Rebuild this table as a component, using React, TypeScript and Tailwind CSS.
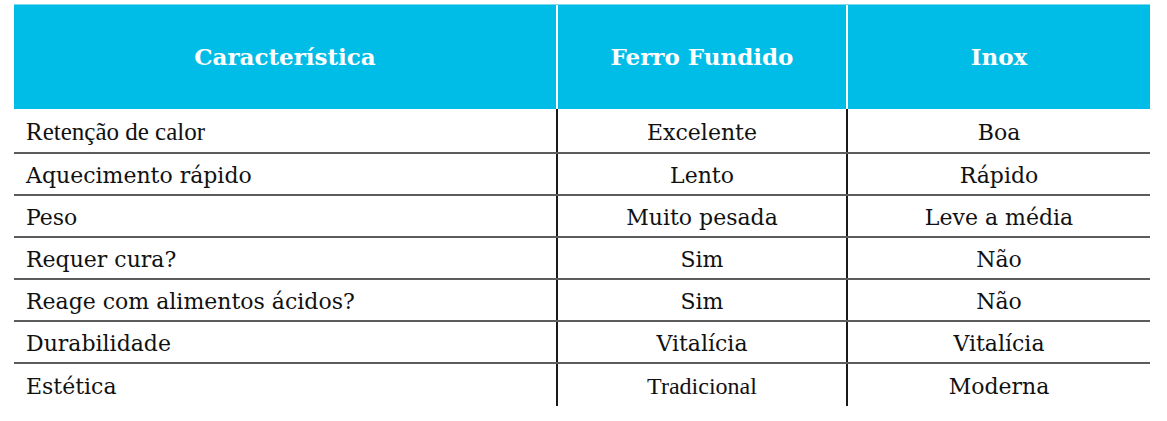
const rows: { label: string; ferro: string; inox: string; labelAlt?: boolean; ferroAlt?: boolean; first?: boolean }[] = [
  { label: "Retenção de calor", ferro: "Excelente", inox: "Boa", labelAlt: true, first: true },
  { label: "Aquecimento rápido", ferro: "Lento", inox: "Rápido" },
  { label: "Peso", ferro: "Muito pesada", inox: "Leve a média" },
  { label: "Requer cura?", ferro: "Sim", inox: "Não" },
  { label: "Reage com alimentos ácidos?", ferro: "Sim", inox: "Não" },
  { label: "Durabilidade", ferro: "Vitalícia", inox: "Vitalícia" },
  { label: "Estética", ferro: "Tradicional", inox: "Moderna", ferroAlt: true },
]

const serif = "font-['DejaVu_Serif',serif] text-[22px] pt-[3px]"
const labelAlt = "font-['Liberation_Serif',serif] text-[25px] pt-[2px]"
const ferroAlt = "font-['Liberation_Serif',serif] text-[24px] pt-[2px]"
const head = "flex items-center justify-center bg-[#00bde7] font-['DejaVu_Serif',serif] text-[23px] font-bold text-white"

export default function App() {
  return (
    <div className="min-h-[421px] bg-white pt-[4px] pl-[14px] text-[#111]">
      <div className="w-[1136px]">
        {/* header */}
        <div className="grid grid-cols-[542px_290px_304px] h-[105px] border-t border-[#7cd6ee]">
          <div className={head}>Característica</div>
          <div className={head + " border-l-2 border-white"}>Ferro Fundido</div>
          <div className={head + " border-l-2 border-white"}>Inox</div>
        </div>

        {/* body */}
        {rows.map((r, i) => (
          <div
            key={r.label}
            className={
              "grid grid-cols-[542px_290px_304px] " +
              (r.first ? "h-[45px] " : "h-[42px] ") +
              (i < rows.length - 1 ? "border-b-2 border-[#5c5c5c]" : "")
            }
          >
            <div className={"flex items-center pl-[12px] " + (r.labelAlt ? labelAlt : serif)}>{r.label}</div>
            <div className={"flex items-center justify-center border-l-2 border-[#1a1a1a] " + (r.ferroAlt ? ferroAlt : serif)}>
              {r.ferro}
            </div>
            <div className={"flex items-center justify-center border-l-2 border-[#1a1a1a] " + serif}>{r.inox}</div>
          </div>
        ))}
      </div>
    </div>
  )
}
